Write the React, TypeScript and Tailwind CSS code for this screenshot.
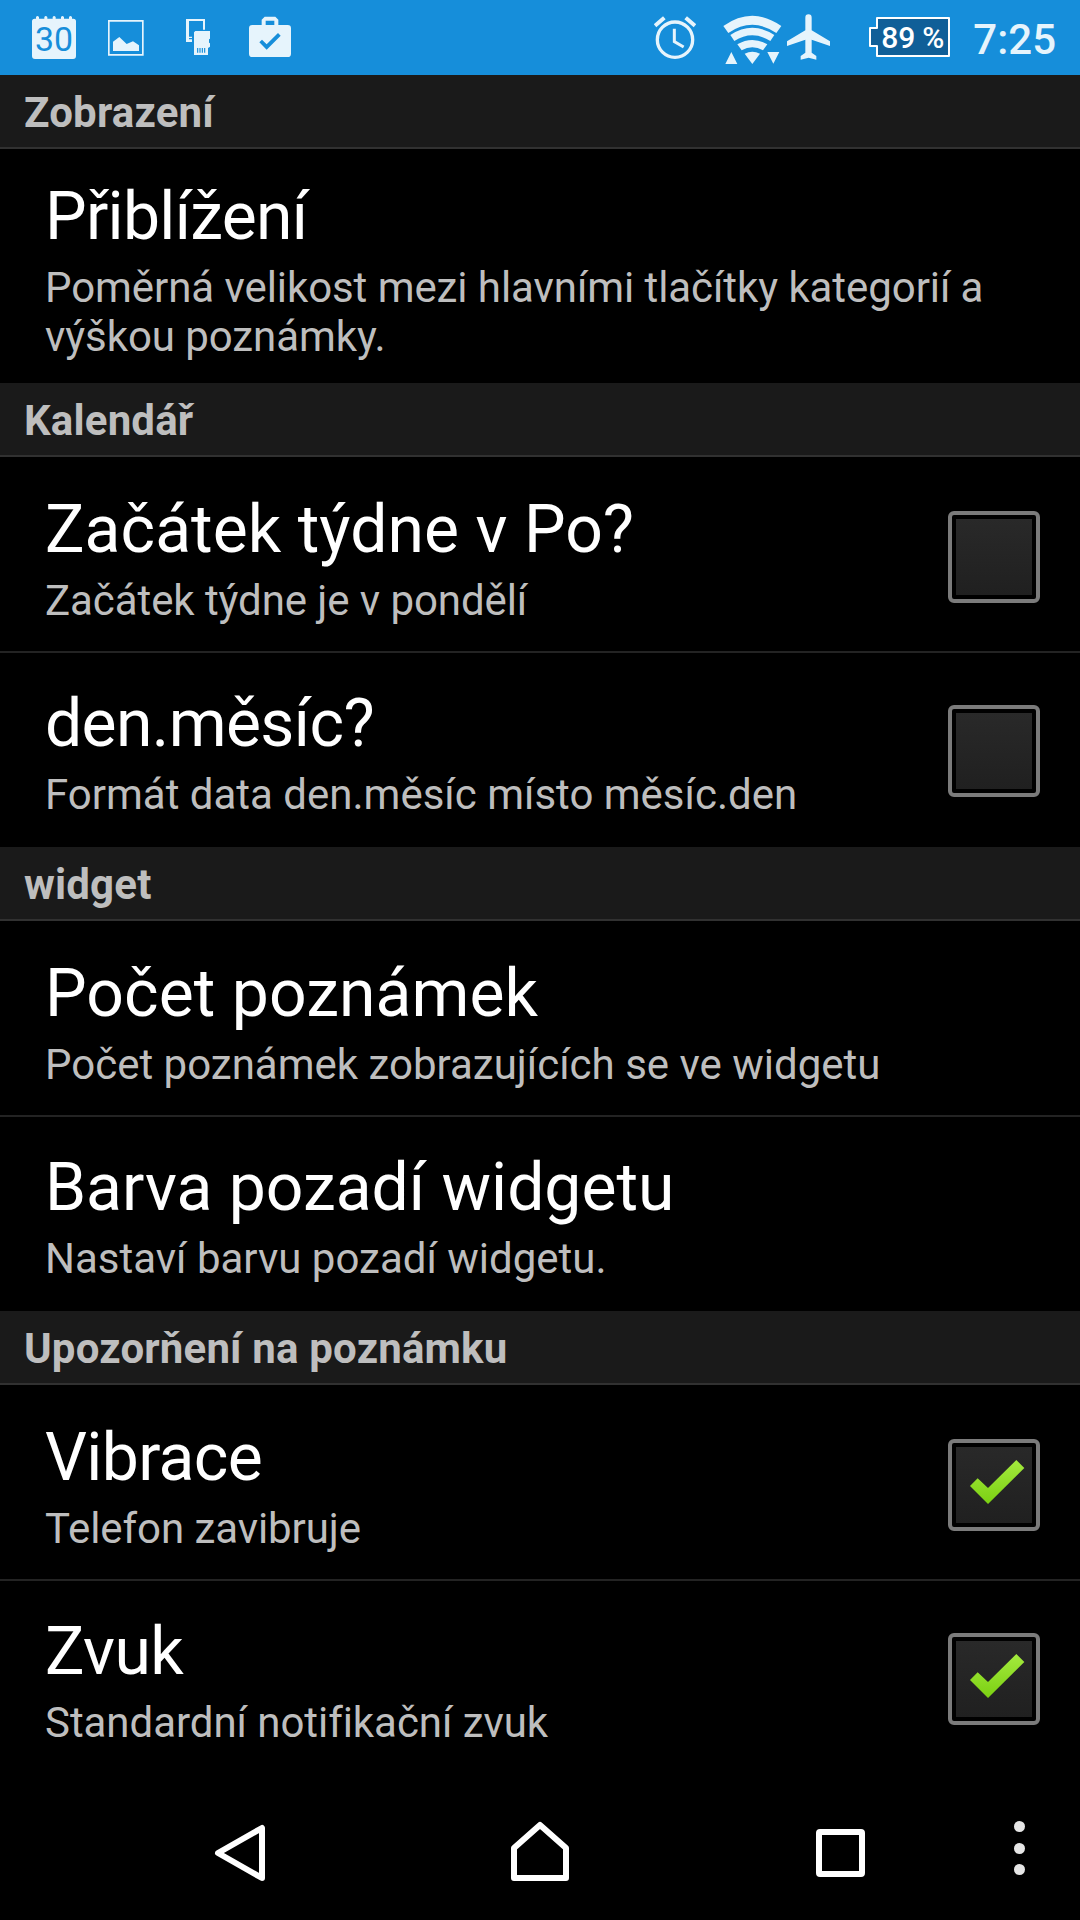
import React from "react";

type Item = { title: string; summary: string; checked?: boolean; titleClass?: string; summaryClass?: string };
type Section = { name: string; items: Item[] };

const sections: Section[] = [
  {
    name: "Zobrazení",
    items: [
      {
        title: "Přiblížení",
        summary: "Poměrná velikost mezi hlavními tlačítky kategorií a výškou poznámky.",
        titleClass: "tracking-[-0.7px]",
        summaryClass: "tracking-[-0.07px]",
      },
    ],
  },
  {
    name: "Kalendář",
    items: [
      {
        title: "Začátek týdne v Po?",
        summary: "Začátek týdne je v pondělí",
        checked: false,
        titleClass: "tracking-[0.05px]",
        summaryClass: "tracking-[-0.08px]",
      },
      {
        title: "den.měsíc?",
        summary: "Formát data den.měsíc místo měsíc.den",
        checked: false,
        titleClass: "tracking-[-0.6px]",
      },
    ],
  },
  {
    name: "widget",
    items: [
      {
        title: "Počet poznámek",
        summary: "Počet poznámek zobrazujících se ve widgetu",
        titleClass: "tracking-[0.08px]",
      },
      { title: "Barva pozadí widgetu", summary: "Nastaví barvu pozadí widgetu." },
    ],
  },
  {
    name: "Upozorňení na poznámku",
    items: [
      {
        title: "Vibrace",
        summary: "Telefon zavibruje",
        checked: true,
        titleClass: "tracking-[-0.65px]",
        summaryClass: "tracking-[-0.07px]",
      },
      {
        title: "Zvuk",
        summary: "Standardní notifikační zvuk",
        checked: true,
        titleClass: "tracking-[-0.6px]",
        summaryClass: "tracking-[-0.05px]",
      },
    ],
  },
];

function StatusBar() {
  return (
    <header className="flex h-[75px] shrink-0 items-start bg-[#168eda] text-[#e6f4fc]">
      <svg className="mt-4 ml-8 h-[43px] w-11" viewBox="96 48 132 129" fill="currentColor">
        <path d="M104 56h4v-5q4-6 9 0v5h16v-5q4-6 9 0v5h16v-5q4-6 9 0v5h16v-5q4-6 9 0v5h15v-5q4-6 9 0v5h4q8 0 8 8v104q0 9-9 9H105q-9 0-9-9V64q0-8 8-8z" />
        <text x="105" y="154" textLength="114" lengthAdjust="spacingAndGlyphs" fontSize="101" fontFamily="Roboto" fontWeight="400" fill="#168eda">30</text>
      </svg>
      <svg className="mt-5 ml-8 h-9 w-9" viewBox="324 60 108 108">
        <path d="M326.500 62.500h102v102h-102z" fill="none" stroke="currentColor" strokeWidth="5" />
        <path d="M339 125l19-14 22 21 19-8 18 12v17h-78z" fill="currentColor" />
      </svg>
      <svg className="mt-[18px] ml-[42px] h-[38px] w-6" viewBox="558 54 72 114" fill="currentColor">
        <path d="M558 57h57v32h-6V63h-42v47h9v4h-9v4h9v8h-18z" />
        <path d="M586 93h44v23l-3 2v10l3 2v10l-6 4v21h-42V97z" />
        <path d="M593 144v14M600 144v14M607 144v14M614 144v14" stroke="#168eda" strokeWidth="3.500" />
      </svg>
      <svg className="mt-4 ml-[39px] h-[41px] w-[42px]" viewBox="747 48 126 123" fill="currentColor" fillRule="evenodd">
        <path d="M785 75V59l9-9h32l9 9v16h28q10 0 10 10v76q0 10-10 10H757q-10 0-10-10V85q0-10 10-10zM797 75h26V62h-26zM778 127l8-8 14 14 34-34 8 8-42 42z" />
      </svg>
      <div className="grow" />
      <svg className="mt-4 h-[43px] w-[42px]" viewBox="74 48 126 129" fill="none" stroke="currentColor">
        <circle cx="137" cy="119" r="53" strokeWidth="10" />
        <path d="M77 77l28-24M197 77l-28-24" strokeWidth="12" />
        <path d="M135 86v39l28 16" strokeWidth="9" />
      </svg>
      <svg className="mt-[15px] ml-[27px] h-[50px] w-[59px]" viewBox="278 45 177 150" fill="currentColor">
        <path d="M279 78q87-61 174 0l-15 21q-72-49-144 0z" />
        <path d="M300 105q66-43 132 0l-12 18q-54-34-108 0z" />
        <path d="M321 133q45-26 90 0l-13 18q-32-19-64 0z" />
        <path d="M343 161q23-11 46 0l-23 31z" />
        <path d="M303 156l18 36h-36zM411 156h36l-18 35z" />
      </svg>
      <svg className="mt-3.5 ml-[5px] h-[46px] w-[43px]" viewBox="471 42 129 138" fill="currentColor">
        <path d="M526 53q0-10 9.500-10t9.500 10v38l55 33v14l-55-19v39l14 10v11l-23-6-24 6v-11l14-10v-39l-55 19v-14l55-33z" />
      </svg>
      <div className="relative mt-[17px] ml-[39px] h-10 w-[81px]">
        <svg className="absolute inset-0 h-10 w-[81px]" viewBox="0 0 81 40">
          <path d="M8 1h72v38H8V29H1V11h7z" fill="#105f98" stroke="#fff" strokeWidth="2" strokeLinejoin="round" />
        </svg>
        <span className="absolute top-1 left-3 text-[30px] leading-[34px] font-medium tracking-[-0.2px] whitespace-nowrap text-white">89 %</span>
      </div>
      <span className="mt-[15px] mr-6 ml-[23px] text-[42px] leading-[50px] font-medium">7:25</span>
    </header>
  );
}

function CheckBox({ checked }: { checked: boolean }) {
  return (
    <span className="mr-10 flex h-[92px] w-[92px] shrink-0 items-center justify-center rounded-[6px] border-4 border-[#7b7b7b] bg-black">
      <span className="h-[76px] w-[76px] bg-linear-to-b from-[#292929] to-[#202020]">
        {checked && (
          <svg className="h-[76px] w-[76px]" viewBox="108 111 228 228">
            <defs>
              <linearGradient id="tick" x1="0" y1="0" x2="0" y2="1">
                <stop offset="0" stopColor="#a4ea3e" />
                <stop offset="1" stopColor="#7bd012" />
              </linearGradient>
            </defs>
            <path d="M150 228l23-23 31 29 85-84 24 24-109 108z" fill="url(#tick)" />
          </svg>
        )}
      </span>
    </span>
  );
}

function PreferenceRow({ item, size, pad }: { item: Item; size: string; pad: string }) {
  return (
    <div className={`flex items-start ${size} ${pad}`}>
      <div className="grow pl-[45px]">
        <h3 className={`text-[66px] leading-[78px] font-normal text-white ${item.titleClass ?? ""}`}>{item.title}</h3>
        <p className={`w-[960px] pt-[7px] text-[42px] leading-[49px] text-[#bebebe] ${item.summaryClass ?? ""}`}>{item.summary}</p>
      </div>
      {item.checked !== undefined && (
        <div className="-ml-[960px] pt-5">
          <CheckBox checked={item.checked} />
        </div>
      )}
    </div>
  );
}

function NavBar() {
  return (
    <nav className="flex h-[145px] shrink-0 items-start bg-black text-white">
      <svg className="mt-[48px] ml-[213px] h-[60px] w-[54px]" viewBox="0 0 54 60" fill="none" stroke="currentColor" strokeWidth="6" strokeLinejoin="round">
        <path d="M49 5v50L5 30z" />
      </svg>
      <svg className="mt-[45px] ml-[243px] h-[63px] w-[60px]" viewBox="0 0 60 63" fill="none" stroke="currentColor" strokeWidth="6" strokeLinejoin="round">
        <path d="M30 5l26 23v30H4V28z" />
      </svg>
      <span className="mt-[54px] ml-[246px] h-12 w-[49px] rounded-[4px] border-6 border-white" />
      <div className="mt-[46px] ml-[149px] flex flex-col gap-[10.500px]">
        <i className="h-[11px] w-[11px] rounded-full bg-[#e6e6e6]" />
        <i className="h-[11px] w-[11px] rounded-full bg-[#e6e6e6]" />
        <i className="h-[11px] w-[11px] rounded-full bg-[#e6e6e6]" />
      </div>
    </nav>
  );
}

export default function App() {
  return (
    <div className="flex h-[1920px] w-[1080px] flex-col overflow-hidden bg-black font-['Roboto',sans-serif]">
      <StatusBar />
      <main className="h-[1700px] shrink-0">
        {sections.map((section, s) => (
          <section key={section.name}>
            <h2 className="h-[74px] border-b-2 border-[#313131] bg-[#1a1a1a] pt-[13px] pl-6 text-[42px] leading-[50px] font-bold tracking-[0.17px] text-[#bebebe]">
              {section.name}
            </h2>
            <div className="divide-y-2 divide-[#232323]">
              {section.items.map((item, i) => (
                <div key={item.title}>
                  <PreferenceRow
                    item={item}
                    size={s === 0 ? "h-[234px]" : "h-[194px]"}
                    pad={s === 0 ? "pt-[29px]" : i === 0 ? "pt-[34px]" : "pt-[32px]"}
                  />
                </div>
              ))}
            </div>
          </section>
        ))}
      </main>
      <NavBar />
    </div>
  );
}
